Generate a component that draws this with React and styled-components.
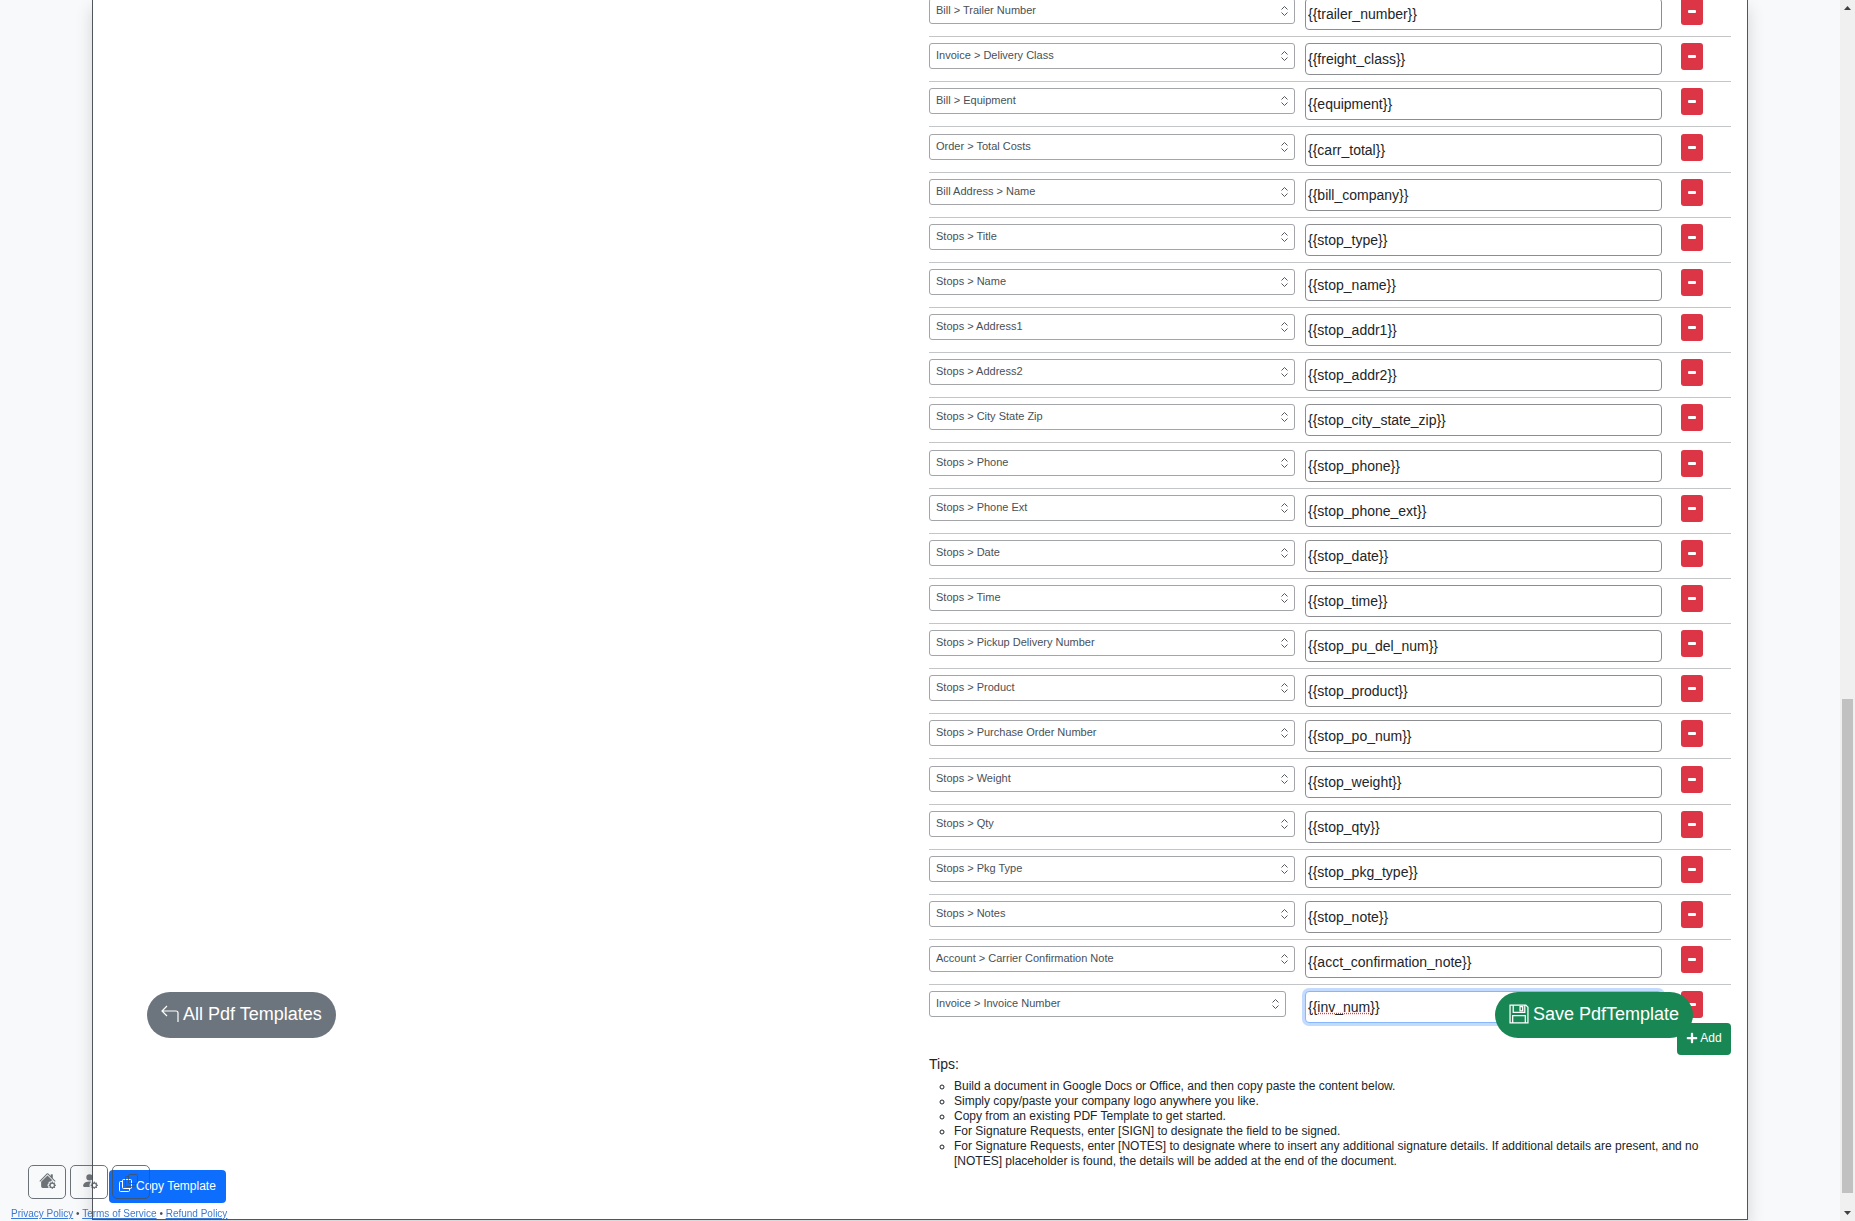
import styled, { createGlobalStyle } from "styled-components"
import { FaPlus } from "react-icons/fa"
import { BsHouseGearFill, BsPersonFillGear } from "react-icons/bs"

const fields = [
    ["Bill > Trailer Number", "{{trailer_number}}"],
    ["Invoice > Delivery Class", "{{freight_class}}"],
    ["Bill > Equipment", "{{equipment}}"],
    ["Order > Total Costs", "{{carr_total}}"],
    ["Bill Address > Name", "{{bill_company}}"],
    ["Stops > Title", "{{stop_type}}"],
    ["Stops > Name", "{{stop_name}}"],
    ["Stops > Address1", "{{stop_addr1}}"],
    ["Stops > Address2", "{{stop_addr2}}"],
    ["Stops > City State Zip", "{{stop_city_state_zip}}"],
    ["Stops > Phone", "{{stop_phone}}"],
    ["Stops > Phone Ext", "{{stop_phone_ext}}"],
    ["Stops > Date", "{{stop_date}}"],
    ["Stops > Time", "{{stop_time}}"],
    ["Stops > Pickup Delivery Number", "{{stop_pu_del_num}}"],
    ["Stops > Product", "{{stop_product}}"],
    ["Stops > Purchase Order Number", "{{stop_po_num}}"],
    ["Stops > Weight", "{{stop_weight}}"],
    ["Stops > Qty", "{{stop_qty}}"],
    ["Stops > Pkg Type", "{{stop_pkg_type}}"],
    ["Stops > Notes", "{{stop_note}}"],
    ["Account > Carrier Confirmation Note", "{{acct_confirmation_note}}"],
    ["Invoice > Invoice Number", "{{inv_num}}"],
]

const tips = [
    "Build a document in Google Docs or Office, and then copy paste the content below.",
    "Simply copy/paste your company logo anywhere you like.",
    "Copy from an existing PDF Template to get started.",
    "For Signature Requests, enter [SIGN] to designate the field to be signed.",
    "For Signature Requests, enter [NOTES] to designate where to insert any additional signature details. If additional details are present, and no [NOTES] placeholder is found, the details will be added at the end of the document.",
]

const GlobalStyle = createGlobalStyle`
    * { box-sizing: border-box; }
    body {
        margin: 0;
        overflow: hidden;
        background: #f8f9fa;
        color: #212529;
        font-family: "Liberation Sans", Arial, sans-serif;
        font-size: 14px;
    }
    button, input, select { font-family: inherit; margin: 0; }
`

const Screen = styled.div`
    display: flex;
    height: 100vh;
    overflow: hidden;
`
const Content = styled.div`
    flex: 1;
    min-width: 0;
`
const Panel = styled.main`
    width: 90%;
    margin: 0 auto;
    padding: 0 16px 50px;
    display: grid;
    grid-template-columns: 1fr 1fr;
    column-gap: 18px;
    background: #fff;
    border: 1px solid #50565c;
    border-top: 0;
    box-shadow: 0 8px 16px rgba(0, 0, 0, 0.15);
`
const Mapping = styled.section`
    grid-column: 2;
    min-width: 0;
`
/* list is scrolled, the first row starts above the window */
const Rows = styled.div`
    margin-top: -8px;
`
const Row = styled.div`
    display: grid;
    grid-template-columns: 1fr 1fr 50px;
    align-items: start;
    padding: 6px 0;
    border-bottom: 1px solid #c4c5c7;
    &:nth-child(7n + 4) { padding-top: 7px; }
    &:last-child { border-bottom: 0; padding-bottom: 0; }
`
const SelectBox = styled.div`
    display: grid;
    align-items: center;
    width: ${props => props.$short ? "95%" : "auto"};
    margin-right: ${props => props.$short ? "0" : "10px"};
    select, svg { grid-area: 1 / 1; }
    svg { justify-self: end; margin-right: 6px; pointer-events: none; }
`
const Select = styled.select`
    width: 100%;
    height: 26px;
    padding: 0 20px 2px 6px;
    appearance: none;
    background: #fff;
    border: 1px solid #a3a5a8;
    border-radius: 3px;
    color: #495057;
    font-size: 11px;
`
const Input = styled.input`
    width: 95%;
    height: 32px;
    padding: 0 2px 1px;
    background: #fff;
    border: 1px solid ${props => props.$focused ? "#86b7fe" : "#8b8d90"};
    border-radius: 4px;
    box-shadow: ${props => props.$focused ? "0 0 0 3px #c2dbfe" : "none"};
    color: #212529;
    font-size: 14px;
    outline: none;
    text-decoration: ${props => props.$focused ? "underline dotted #e04040" : "none"};
`
const RemoveButton = styled.button`
    display: flex;
    align-items: center;
    justify-content: center;
    width: 22px;
    height: 27px;
    padding: 0 0 1px;
    background: #dc3545;
    border: 0;
    border-radius: 3px;
`
const AddButton = styled.button`
    display: flex;
    align-items: center;
    justify-content: center;
    gap: 2px;
    width: 54px;
    height: 32px;
    margin-left: auto;
    padding: 0 0 2px;
    background: #198754;
    border: 0;
    border-radius: 4px;
    color: #fff;
    font-size: 12px;
`
const TipsTitle = styled.h2`
    margin: 0;
    font-size: 14px;
    font-weight: 400;
    line-height: 18px;
`
const TipsList = styled.ul`
    margin: 6px 0 0;
    padding-left: 25px;
    list-style: circle;
    font-size: 12px;
    line-height: 15px;
`
const PillButton = styled.button`
    position: fixed;
    bottom: 183px;
    ${props => props.$side === "left" ? "left: 147px;" : "right: 162px;"}
    display: flex;
    align-items: center;
    gap: 4px;
    height: 46px;
    padding: 0 14px 2px;
    border: 0;
    border-radius: 23px;
    background: ${props => props.$side === "left" ? "#6c757d" : "#198754"};
    color: #fff;
    font-size: 18px;
`
const CopyButton = styled.button`
    position: fixed;
    left: 109px;
    bottom: 18px;
    display: flex;
    align-items: center;
    gap: 4px;
    height: 33px;
    padding: 0 10px 2px;
    background: #0d6efd;
    border: 0;
    border-radius: 4px;
    color: #fff;
    font-size: 12px;
`
const Footer = styled.footer`
    position: fixed;
    left: 11px;
    bottom: 0;
    opacity: 0.8;
`
const QuickButtons = styled.div`
    display: flex;
    gap: 4px;
    margin-left: 17px;
`
const QuickButton = styled.button`
    display: flex;
    align-items: center;
    justify-content: center;
    width: 38px;
    height: 34px;
    padding: 0 0 3px;
    background: transparent;
    border: 1px solid #495057;
    border-radius: 5px;
    color: #495057;
    font-size: 17px;
`
const Links = styled.nav`
    margin-top: 7px;
    font-size: 10px;
    line-height: 15px;
    a { color: #0a58ca; }
`
const Scrollbar = styled.div`
    display: flex;
    flex-direction: column;
    align-items: center;
    justify-content: space-between;
    width: 15px;
    padding: 6px 0;
    background: #f0f0f0;
`
const Thumb = styled.div`
    width: 11px;
    height: 494px;
    margin: auto 0 18px;
    background: #c1c1c1;
`

function Arrow({ down }) {
    return (
        <svg width="7" height="4" viewBox="0 0 7 4" aria-hidden="true">
            <path d={down ? "M0 0h7L3.5 4z" : "M0 4h7L3.5 0z"} fill="#404040" />
        </svg>
    )
}

function Carets() {
    return (
        <svg width="9" height="12" viewBox="0 0 9 12" fill="none" stroke="#55585c" aria-hidden="true">
            <path d="M1.500 4.500 4.500 1.500 7.500 4.500M1.500 7.500 4.500 10.500 7.500 7.500" />
        </svg>
    )
}

function MinusIcon() {
    return (
        <svg width="8" height="3" viewBox="0 0 8 3" aria-hidden="true">
            <rect width="8" height="3" rx="1" fill="#fff" />
        </svg>
    )
}

function BackIcon() {
    return (
        <svg width="18" height="18" viewBox="0 0 18 18" fill="none" stroke="#fff" strokeWidth="1.2" aria-hidden="true">
            <path d="M6 1 1 6l5 5M1 6h14q2 0 2 2v9" />
        </svg>
    )
}

function SaveIcon() {
    return (
        <svg width="20" height="20" viewBox="0 0 19 19" fill="none" stroke="#fff" strokeWidth="1.2" aria-hidden="true">
            <path d="M1 1h15l2 2v15H1zM4 1v7h11V1M3.500 18v-7h12v7" />
            <path d="M10.500 2.500h2.500v4h-2.500z" />
        </svg>
    )
}

function CopyIcon({ color }) {
    return (
        <svg width="13" height="13" viewBox="0 0 13 13" fill="none" stroke={color} aria-hidden="true">
            <path d="M4.500.5h7q1 0 1 1v7q0 1-1 1h-7q-1 0-1-1v-7q0-1 1-1zM3.500 2.500h-2q-1 0-1 1v8q0 1 1 1h8q1 0 1-1v-2" />
        </svg>
    )
}

function FieldRow({ name, value, last }) {
    return (
        <Row>
            <SelectBox $short={last}>
                <Select aria-label="Field" defaultValue={name}>
                    <option>{name}</option>
                </Select>
                <Carets />
            </SelectBox>
            <Input aria-label={name} defaultValue={value} $focused={last} spellCheck={false} />
            <RemoveButton type="button" aria-label={"Remove " + name}><MinusIcon /></RemoveButton>
        </Row>
    )
}

export default function App() {
    return (
        <>
            <GlobalStyle />
            <Screen>
                <Content>
                    <Panel>
                        <Mapping>
                            <Rows>
                                {fields.map(([name, value], i) => (
                                    <FieldRow key={value} name={name} value={value} last={i === fields.length - 1} />
                                ))}
                            </Rows>
                            <AddButton type="button"><FaPlus />Add</AddButton>
                            <TipsTitle>Tips:</TipsTitle>
                            <TipsList>
                                {tips.map(tip => <li key={tip}>{tip}</li>)}
                            </TipsList>
                        </Mapping>
                    </Panel>
                </Content>
                <Scrollbar>
                    <Arrow />
                    <Thumb />
                    <Arrow down />
                </Scrollbar>
            </Screen>
            <PillButton type="button" $side="left"><BackIcon />All Pdf Templates</PillButton>
            <PillButton type="button" $side="right"><SaveIcon />Save PdfTemplate</PillButton>
            <CopyButton type="button"><CopyIcon color="#fff" />Copy Template</CopyButton>
            <Footer>
                <QuickButtons>
                    <QuickButton type="button" aria-label="Company settings"><BsHouseGearFill /></QuickButton>
                    <QuickButton type="button" aria-label="User settings"><BsPersonFillGear /></QuickButton>
                    <QuickButton type="button" aria-label="Copy"><CopyIcon color="#495057" /></QuickButton>
                </QuickButtons>
                <Links>
                    <a href="#privacy">Privacy Policy</a> • <a href="#terms">Terms of Service</a> • <a href="#refund">Refund Policy</a>
                </Links>
            </Footer>
        </>
    )
}
